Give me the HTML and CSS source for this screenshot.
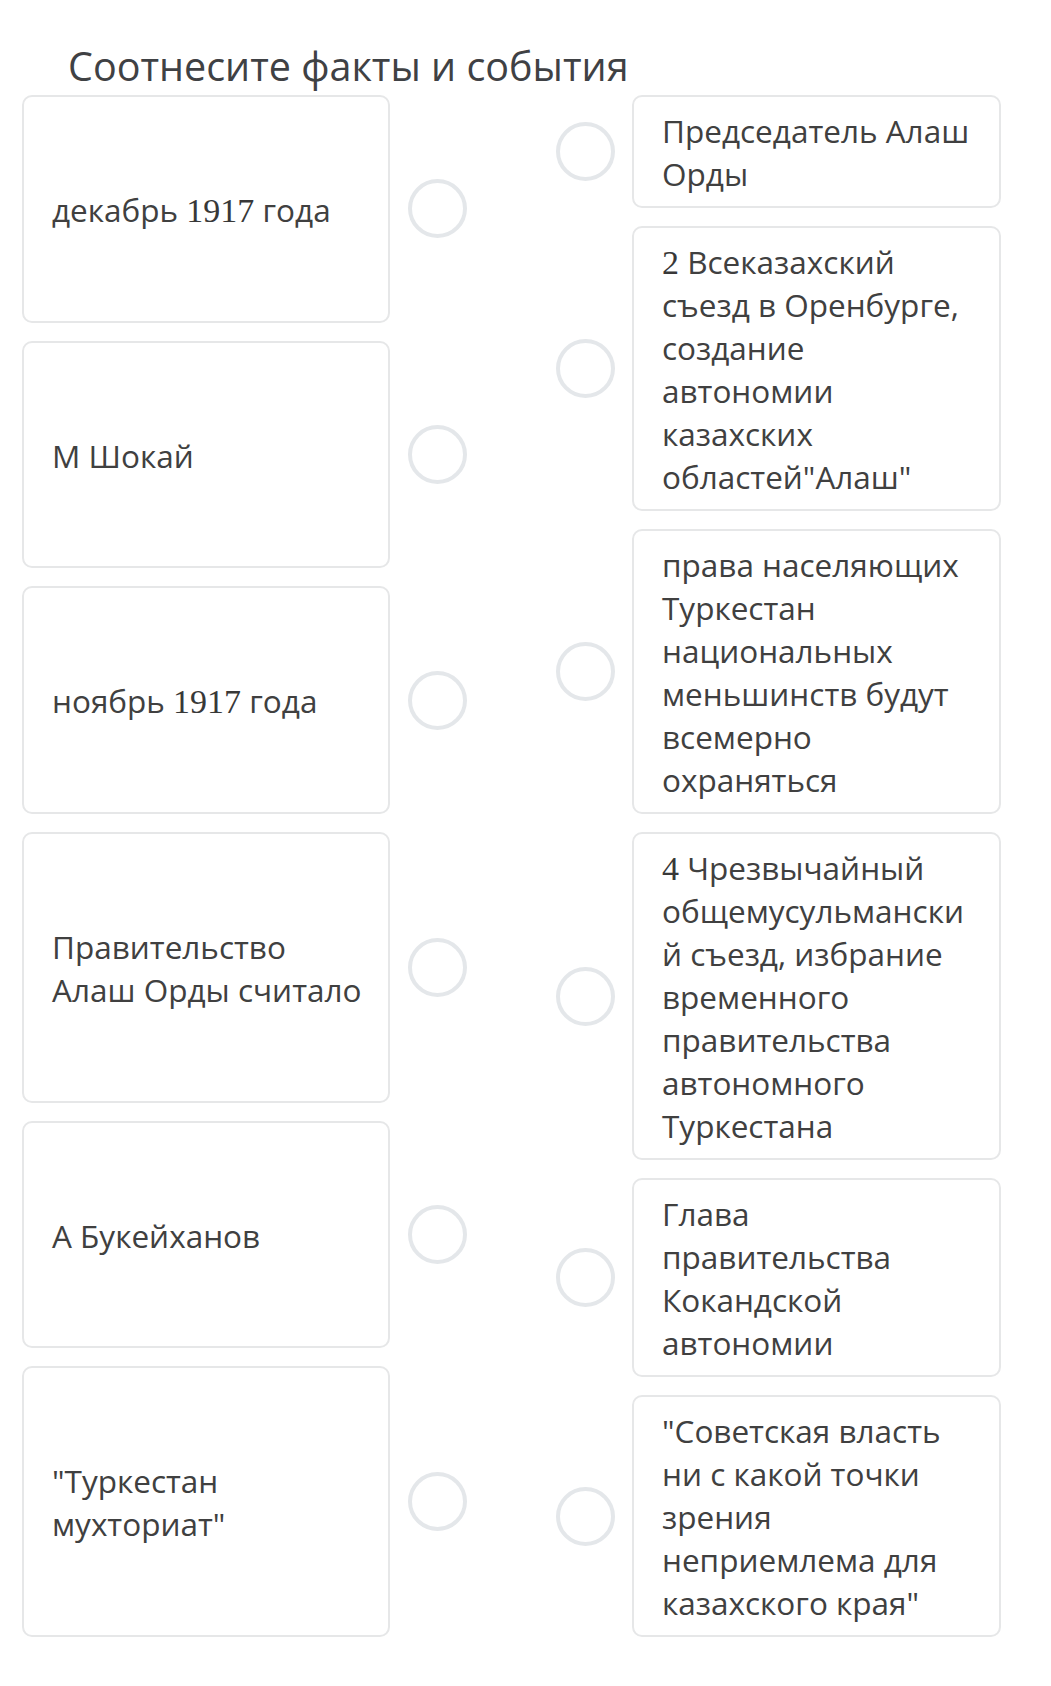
FILE: index.html
```html
<!DOCTYPE html>
<html lang="ru">
<head>
    <meta charset="UTF-8">
    <meta name="viewport" content="width=device-width, initial-scale=1.0">
    <title>Соотнесите факты и события</title>
    <link rel="stylesheet" href="styles.css">
</head>
<body>
    <h2 class="question">Соотнесите факты и события</h2>

    <div class="board">
        <div class="column left">
            <div class="item">
                <div class="card"><span>декабрь <span class="num">1917</span> года</span></div>
                <span class="dot"></span>
            </div>
            <div class="item">
                <div class="card"><span>М Шокай</span></div>
                <span class="dot"></span>
            </div>
            <div class="item">
                <div class="card"><span>ноябрь <span class="num">1917</span> года</span></div>
                <span class="dot"></span>
            </div>
            <div class="item">
                <div class="card"><span>Правительство Алаш Орды считало</span></div>
                <span class="dot"></span>
            </div>
            <div class="item">
                <div class="card"><span>А Букейханов</span></div>
                <span class="dot"></span>
            </div>
            <div class="item">
                <div class="card"><span>"Туркестан мухториат"</span></div>
                <span class="dot"></span>
            </div>
        </div>

        <div class="column right">
            <div class="item">
                <span class="dot"></span>
                <div class="card">Председатель Алаш Орды</div>
            </div>
            <div class="item">
                <span class="dot"></span>
                <div class="card"><span class="num">2</span> Всеказахский съезд в Оренбурге, создание автономии казахских областей"Алаш"</div>
            </div>
            <div class="item">
                <span class="dot"></span>
                <div class="card">права населяющих Туркестан национальных меньшинств будут всемерно охраняться</div>
            </div>
            <div class="item">
                <span class="dot"></span>
                <div class="card"><span class="num">4</span> Чрезвычайный общемусульманский съезд, избрание временного правительства автономного Туркестана</div>
            </div>
            <div class="item">
                <span class="dot"></span>
                <div class="card">Глава правительства Кокандской автономии</div>
            </div>
            <div class="item">
                <span class="dot"></span>
                <div class="card">"Советская власть ни с какой точки зрения неприемлема для казахского края"</div>
            </div>
        </div>
    </div>
</body>
</html>
```

FILE: styles.css
```css
body {
    margin: 0;
    background: #fff;
    font-family: "Open Sans", "Noto Sans", sans-serif;
    color: #404040;
}
.question {
    margin: 0;
    padding: 39px 0 2px 68px;
    font-size: 39.5px;
    font-weight: normal;
    line-height: 54px;
    color: #3f4144;
}
.board {
    display: grid;
    grid-template-columns: 445px 445px;
    column-gap: 89px;
    padding: 0 0 0 22px;
}
.column {
    display: flex;
    flex-direction: column;
    gap: 18px;
}
.item {
    display: flex;
    align-items: center;
    gap: 18px;
}
/* left cards share the leftover height of the right column */
.left .item {
    flex: 1 1 auto;
    align-items: stretch;
}
.left .dot {
    align-self: center;
}
.right .item {
    gap: 17px;
}
.card {
    flex: 1;
    border: 2px solid #e6e7e8;
    border-radius: 10px;
    padding: 12px 25px 11px 28px;
    font-size: 31.5px;
    line-height: 43px;
    overflow-wrap: anywhere;
}
.left .card {
    display: flex;
    align-items: center;
    padding-right: 24px;
}
.dot {
    flex: none;
    width: 51px;
    height: 51px;
    border: 4px solid #e4e7ea;
    border-radius: 50%;
}
.num {
    font-family: "Liberation Serif", serif;
    font-size: 34px;
    line-height: 0;
    color: #383838;
}
```
